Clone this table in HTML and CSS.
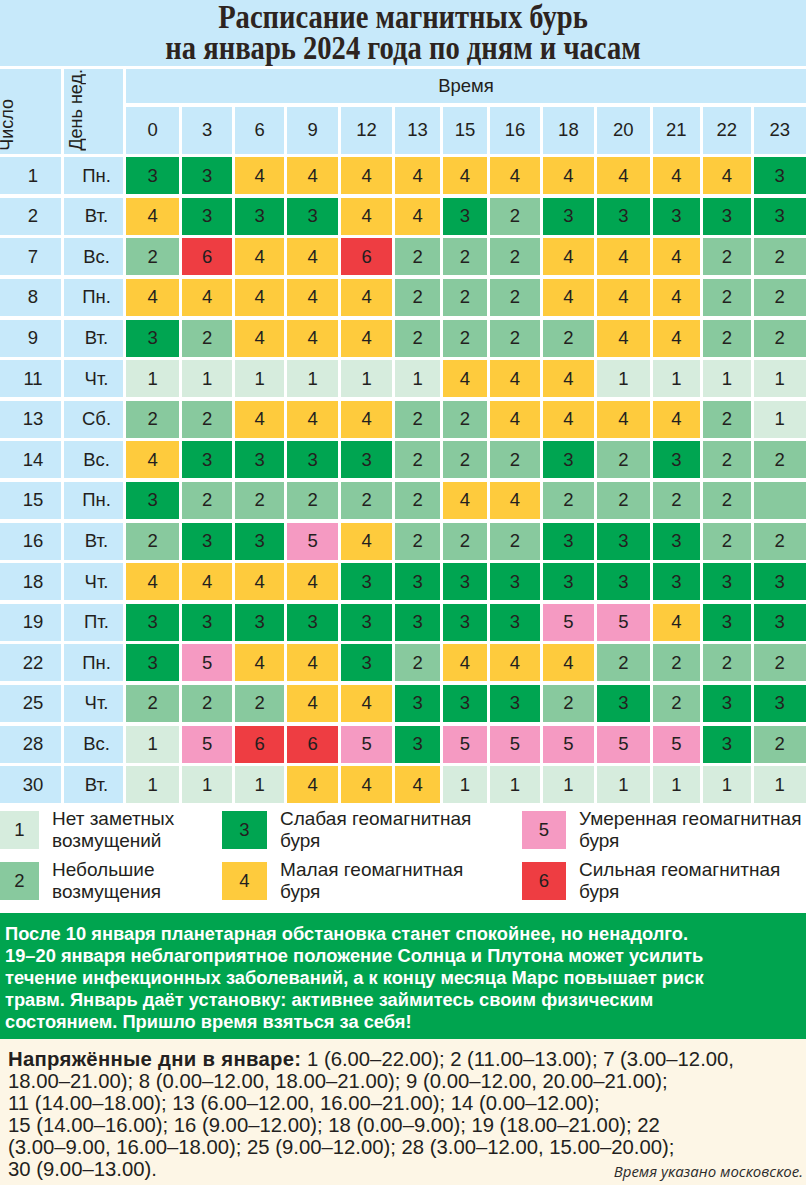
FILE: index.html
```html
<!DOCTYPE html>
<html lang="ru">
<head>
<meta charset="utf-8">
<title>Расписание магнитных бурь</title>
<link rel="stylesheet" href="styles.css">
</head>
<body>
<header class="title">
  <h1>Расписание магнитных бурь<br>на январь 2024 года по дням и часам</h1>
</header>

<div class="grid">
  <div class="hcell lab-num"><span class="vlabel">Число</span></div>
  <div class="hcell lab-day"><span class="vlabel">День нед.</span></div>
  <div class="hcell time">Время</div>
  <div class="hcell hr">0</div><div class="hcell hr">3</div><div class="hcell hr">6</div><div class="hcell hr">9</div><div class="hcell hr">12</div><div class="hcell hr">13</div><div class="hcell hr">15</div><div class="hcell hr">16</div><div class="hcell hr">18</div><div class="hcell hr">20</div><div class="hcell hr">21</div><div class="hcell hr">22</div><div class="hcell hr">23</div>

  <div class="dnum">1</div><div class="dday">Пн.</div>
  <div class="c c3">3</div><div class="c c3">3</div><div class="c c4">4</div><div class="c c4">4</div><div class="c c4">4</div><div class="c c4">4</div><div class="c c4">4</div><div class="c c4">4</div><div class="c c4">4</div><div class="c c4">4</div><div class="c c4">4</div><div class="c c4">4</div><div class="c c3">3</div>

  <div class="dnum">2</div><div class="dday">Вт.</div>
  <div class="c c4">4</div><div class="c c3">3</div><div class="c c3">3</div><div class="c c3">3</div><div class="c c4">4</div><div class="c c4">4</div><div class="c c3">3</div><div class="c c2">2</div><div class="c c3">3</div><div class="c c3">3</div><div class="c c3">3</div><div class="c c3">3</div><div class="c c3">3</div>

  <div class="dnum">7</div><div class="dday">Вс.</div>
  <div class="c c2">2</div><div class="c c6">6</div><div class="c c4">4</div><div class="c c4">4</div><div class="c c6">6</div><div class="c c2">2</div><div class="c c2">2</div><div class="c c2">2</div><div class="c c4">4</div><div class="c c4">4</div><div class="c c4">4</div><div class="c c2">2</div><div class="c c2">2</div>

  <div class="dnum">8</div><div class="dday">Пн.</div>
  <div class="c c4">4</div><div class="c c4">4</div><div class="c c4">4</div><div class="c c4">4</div><div class="c c4">4</div><div class="c c2">2</div><div class="c c2">2</div><div class="c c2">2</div><div class="c c4">4</div><div class="c c4">4</div><div class="c c4">4</div><div class="c c2">2</div><div class="c c2">2</div>

  <div class="dnum">9</div><div class="dday">Вт.</div>
  <div class="c c3">3</div><div class="c c2">2</div><div class="c c4">4</div><div class="c c4">4</div><div class="c c4">4</div><div class="c c2">2</div><div class="c c2">2</div><div class="c c2">2</div><div class="c c2">2</div><div class="c c4">4</div><div class="c c4">4</div><div class="c c2">2</div><div class="c c2">2</div>

  <div class="dnum">11</div><div class="dday">Чт.</div>
  <div class="c c1">1</div><div class="c c1">1</div><div class="c c1">1</div><div class="c c1">1</div><div class="c c1">1</div><div class="c c1">1</div><div class="c c4">4</div><div class="c c4">4</div><div class="c c4">4</div><div class="c c1">1</div><div class="c c1">1</div><div class="c c1">1</div><div class="c c1">1</div>

  <div class="dnum">13</div><div class="dday">Сб.</div>
  <div class="c c2">2</div><div class="c c2">2</div><div class="c c4">4</div><div class="c c4">4</div><div class="c c4">4</div><div class="c c2">2</div><div class="c c2">2</div><div class="c c4">4</div><div class="c c4">4</div><div class="c c4">4</div><div class="c c4">4</div><div class="c c2">2</div><div class="c c1">1</div>

  <div class="dnum">14</div><div class="dday">Вс.</div>
  <div class="c c4">4</div><div class="c c3">3</div><div class="c c3">3</div><div class="c c3">3</div><div class="c c3">3</div><div class="c c2">2</div><div class="c c2">2</div><div class="c c2">2</div><div class="c c3">3</div><div class="c c2">2</div><div class="c c3">3</div><div class="c c2">2</div><div class="c c2">2</div>

  <div class="dnum">15</div><div class="dday">Пн.</div>
  <div class="c c3">3</div><div class="c c2">2</div><div class="c c2">2</div><div class="c c2">2</div><div class="c c2">2</div><div class="c c2">2</div><div class="c c4">4</div><div class="c c4">4</div><div class="c c2">2</div><div class="c c2">2</div><div class="c c2">2</div><div class="c c2">2</div><div class="c c2"></div>

  <div class="dnum">16</div><div class="dday">Вт.</div>
  <div class="c c2">2</div><div class="c c3">3</div><div class="c c3">3</div><div class="c c5">5</div><div class="c c4">4</div><div class="c c2">2</div><div class="c c2">2</div><div class="c c2">2</div><div class="c c3">3</div><div class="c c3">3</div><div class="c c3">3</div><div class="c c2">2</div><div class="c c2">2</div>

  <div class="dnum">18</div><div class="dday">Чт.</div>
  <div class="c c4">4</div><div class="c c4">4</div><div class="c c4">4</div><div class="c c4">4</div><div class="c c3">3</div><div class="c c3">3</div><div class="c c3">3</div><div class="c c3">3</div><div class="c c3">3</div><div class="c c3">3</div><div class="c c3">3</div><div class="c c3">3</div><div class="c c3">3</div>

  <div class="dnum">19</div><div class="dday">Пт.</div>
  <div class="c c3">3</div><div class="c c3">3</div><div class="c c3">3</div><div class="c c3">3</div><div class="c c3">3</div><div class="c c3">3</div><div class="c c3">3</div><div class="c c3">3</div><div class="c c5">5</div><div class="c c5">5</div><div class="c c4">4</div><div class="c c3">3</div><div class="c c3">3</div>

  <div class="dnum">22</div><div class="dday">Пн.</div>
  <div class="c c3">3</div><div class="c c5">5</div><div class="c c4">4</div><div class="c c4">4</div><div class="c c3">3</div><div class="c c2">2</div><div class="c c4">4</div><div class="c c4">4</div><div class="c c4">4</div><div class="c c2">2</div><div class="c c2">2</div><div class="c c2">2</div><div class="c c2">2</div>

  <div class="dnum">25</div><div class="dday">Чт.</div>
  <div class="c c2">2</div><div class="c c2">2</div><div class="c c2">2</div><div class="c c4">4</div><div class="c c4">4</div><div class="c c3">3</div><div class="c c3">3</div><div class="c c3">3</div><div class="c c2">2</div><div class="c c3">3</div><div class="c c2">2</div><div class="c c3">3</div><div class="c c3">3</div>

  <div class="dnum">28</div><div class="dday">Вс.</div>
  <div class="c c1">1</div><div class="c c5">5</div><div class="c c6">6</div><div class="c c6">6</div><div class="c c5">5</div><div class="c c3">3</div><div class="c c5">5</div><div class="c c5">5</div><div class="c c5">5</div><div class="c c5">5</div><div class="c c5">5</div><div class="c c3">3</div><div class="c c2">2</div>

  <div class="dnum">30</div><div class="dday">Вт.</div>
  <div class="c c1">1</div><div class="c c1">1</div><div class="c c1">1</div><div class="c c4">4</div><div class="c c4">4</div><div class="c c4">4</div><div class="c c1">1</div><div class="c c1">1</div><div class="c c1">1</div><div class="c c1">1</div><div class="c c1">1</div><div class="c c1">1</div><div class="c c1">1</div>
</div>

<div class="legend">
  <div class="litem"><div class="sw sw-a c1">1</div><div class="ltext">Нет заметных<br>возмущений</div></div>
  <div class="litem"><div class="sw sw-b c3">3</div><div class="ltext">Слабая геомагнитная<br>буря</div></div>
  <div class="litem"><div class="sw sw-c c5">5</div><div class="ltext">Умеренная геомагнитная<br>буря</div></div>
  <div class="litem"><div class="sw sw-a c2">2</div><div class="ltext">Небольшие<br>возмущения</div></div>
  <div class="litem"><div class="sw sw-b c4">4</div><div class="ltext">Малая геомагнитная<br>буря</div></div>
  <div class="litem"><div class="sw sw-c c6">6</div><div class="ltext">Сильная геомагнитная<br>буря</div></div>
</div>

<div class="note">
  После 10 января планетарная обстановка станет спокойнее, но ненадолго.<br>
  19–20 января неблагоприятное положение Солнца и Плутона может усилить<br>
  течение инфекционных заболеваний, а к концу месяца Марс повышает риск<br>
  травм. Январь даёт установку: активнее займитесь своим физическим<br>
  состоянием. Пришло время взяться за себя!
</div>

<div class="days">
  <p class="days-text"><b>Напряжённые дни в январе:</b> 1 (6.00–22.00); 2 (11.00–13.00); 7 (3.00–12.00,<br>
  18.00–21.00); 8 (0.00–12.00, 18.00–21.00); 9 (0.00–12.00, 20.00–21.00);<br>
  11 (14.00–18.00); 13 (6.00–12.00, 16.00–21.00); 14 (0.00–12.00);<br>
  15 (14.00–16.00); 16 (9.00–12.00); 18 (0.00–9.00); 19 (18.00–21.00); 22<br>
  (3.00–9.00, 16.00–18.00); 25 (9.00–12.00); 28 (3.00–12.00, 15.00–20.00);</p>
  <div class="days-last">
    <span>30 (9.00–13.00).</span>
    <span class="footnote">Время указано московское.</span>
  </div>
</div>
</body>
</html>
```

FILE: styles.css
```css
* { box-sizing: border-box; }

body {
  margin: 0;
  width: 806px;
  background: #ffffff;
  color: #231f20;
  font-family: "Liberation Sans", Arial, sans-serif;
}

.title {
  background: #c7e9fa;
  height: 66px;
  padding-top: 2px;
  text-align: center;
}

.title h1 {
  margin: 0;
  font-family: "Liberation Serif", "Times New Roman", serif;
  font-weight: bold;
  font-size: 33px;
  line-height: 31px;
  color: #2d2420;
  transform: scaleX(0.866);
  transform-origin: 403px 0;
  white-space: nowrap;
}

.grid {
  margin-top: 3px;
  display: grid;
  grid-template-columns: 61px 59px 53fr 49fr 49fr 50fr 51fr 44fr 44fr 49fr 51fr 52fr 47fr 47fr 52fr;
  grid-template-rows: 34px 47px repeat(16, 37px);
  gap: 3.6px 3px;
  font-size: 18.5px;
}

.hcell, .dnum, .dday {
  background: #c7e9fa;
}

.hcell, .dnum, .dday, .c {
  display: flex;
  align-items: center;
  justify-content: center;
}

.lab-num, .lab-day {
  grid-row: 1 / 3;
  justify-content: flex-start;
  align-items: flex-end;
  overflow: hidden;
  padding-bottom: 3px;
}

.lab-num .vlabel { margin-left: -3px; }
.lab-day .vlabel { margin-left: 2px; }

.vlabel {
  writing-mode: vertical-rl;
  transform: rotate(180deg);
  font-size: 18px;
  line-height: 20px;
  white-space: nowrap;
}

.time {
  grid-column: 3 / -1;
}

.dnum { padding-left: 5px; }
.dday { padding-left: 6px; }

.c1 { background: #d6ecdd; }
.c2 { background: #88c99e; }
.c3 { background: #00a551; }
.c4 { background: #fecb3d; }
.c5 { background: #f59ac2; }
.c6 { background: #ee3d42; }

.legend {
  margin-top: 5px;
  display: grid;
  grid-template-columns: 222px 300px 1fr;
  row-gap: 7px;
}

.litem {
  display: flex;
  align-items: center;
  gap: 13px;
}

.sw {
  height: 38px;
  flex: none;
  display: flex;
  align-items: center;
  justify-content: center;
  font-size: 18.5px;
}

.sw-a { width: 39px; }
.sw-b { width: 45px; }
.sw-c { width: 44px; }

.ltext {
  font-size: 19px;
  line-height: 22px;
}

.note {
  margin-top: 10px;
  background: #00a44f;
  color: #ffffff;
  font-weight: bold;
  font-size: 18.3px;
  line-height: 22px;
  padding: 10px 5px 6px;
  white-space: nowrap;
}

.days {
  background: #fdf6e6;
  padding: 9px 3px 5px 8px;
  font-size: 20.3px;
  line-height: 22px;
  white-space: nowrap;
}

.days-text {
  margin: 0;
}

.days-text b {
  letter-spacing: 0.3px;
}

.days-last {
  display: flex;
  justify-content: space-between;
  align-items: flex-start;
}

.footnote {
  padding-top: 4px;
  font-family: "Open Sans", "Liberation Sans", sans-serif;
  font-style: italic;
  font-size: 15px;
  line-height: 18px;
  color: #2b2b2b;
}
```
